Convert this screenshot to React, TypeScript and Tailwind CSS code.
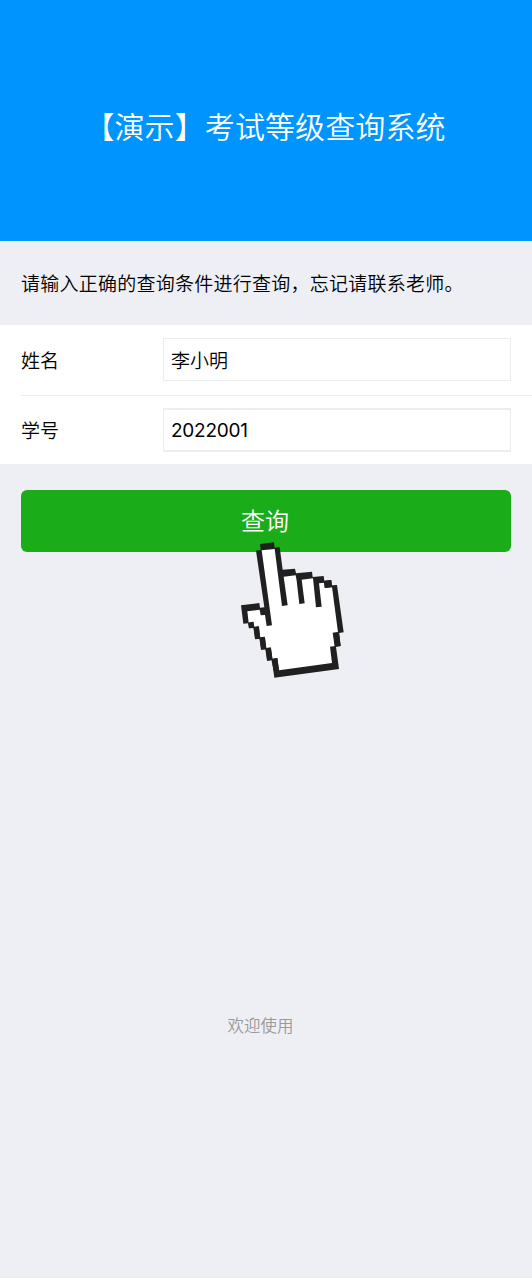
import React, { useState } from 'react';

interface FieldProps {
  label: string;
  value: string;
  onChange: (value: string) => void;
  inputClassName: string;
}

const Field: React.FC<FieldProps> = ({ label, value, onChange, inputClassName }) => (
  <label className="flex items-center pr-[21px]">
    <span className="w-[142px] shrink-0 pt-[5px]">{label}</span>
    <input
      type="text"
      value={value}
      onChange={(e) => onChange(e.target.value)}
      className={`w-full min-w-0 border-[#ebeeee] bg-white px-[7px] outline-none ${inputClassName}`}
    />
  </label>
);

// Pixel-style pointing hand, slightly tilted
const HandPointer: React.FC = () => (
  <svg viewBox="0 0 375 450" className="pointer-events-none absolute left-[230px] top-[535px] h-[150px] w-[125px]">
    <path
      fill="#202020"
      d="M90 27L132 22L134 38L149 36L158 104L195 101L198 115L246 110L248 126L281 123L283 137L303 135L306 151L321 150L341 292L327 294L332 333L318 335L327 402L133 428L126 375L112 377L107 343L94 344L89 311L76 313L71 279L57 280L55 265L40 266L33 211L88 204L90 218L103 217L78 47L92 45Z"
    />
    <path
      fill="#fff"
      d="M95 46L134 42L156 213L173 211L161 125L197 121L200 137L208 207L224 205L215 134L249 130L258 217L275 215L267 145L283 143L285 159L306 156L324 292L310 294L315 333L300 335L306 384L147 406L142 369L127 371L122 337L109 339L104 305L90 307L86 273L73 275L70 260L56 263L52 229L89 224L92 241L105 240L110 273L126 271Z"
    />
    {/* stair corners that keep the outline at full thickness */}
    <path
      fill="#202020"
      d="M54 263L70 260L73 278L57 280ZM70 277L87 275L91 310L75 312ZM88 309L105 307L109 342L93 344ZM106 341L123 338L128 375L111 377ZM124 373L142 369L147 406L131 409ZM281 138L304 135L307 157L284 159ZM308 293L327 291L332 333L314 335Z"
    />
  </svg>
);

const App: React.FC = () => {
  const [name, setName] = useState<string>('李小明');
  const [studentId, setStudentId] = useState<string>('2022001');

  return (
    <div className="relative flex h-[1280px] w-full flex-col border-b-2 border-white bg-[#eeeff5] font-['Inter','Noto_Sans_CJK_SC',sans-serif] text-[19px] font-[350] text-black">
      <header className="flex h-[241px] items-center justify-center bg-[#0094ff] pr-[2px] pt-[14px]">
        <h1 className="whitespace-nowrap text-[30px] font-[350] tracking-[0.1px] text-white">【演示】考试等级查询系统</h1>
      </header>

      <p className="flex h-[84px] items-center whitespace-nowrap pl-[21px] pt-1 tracking-[0.25px]">
        请输入正确的查询条件进行查询，忘记请联系老师。
      </p>

      <form onSubmit={(e) => e.preventDefault()}>
        <div className="h-[139px] bg-white pl-[21px]">
          <div className="border-b border-[#ebeeee] pb-[14px] pt-[13px]">
            <Field label="姓名" value={name} onChange={setName} inputClassName="h-[43px] border pb-px" />
          </div>
          <div className="pt-[12px]">
            <Field
              label="学号"
              value={studentId}
              onChange={setStudentId}
              inputClassName="h-[44px] border border-y-2 font-normal tracking-[-0.25px]"
            />
          </div>
        </div>
        <div className="px-[21px] pt-[26px]">
          <button type="submit" className="h-[62px] w-full rounded-[6px] bg-[#1aad19] pr-[2px] pt-0.5 text-[24px] font-[350] text-white">
            查询
          </button>
        </div>
      </form>

      <footer className="mt-[462px] pr-[11px] text-center text-[16.5px] font-[350] text-[#999]">欢迎使用</footer>

      <HandPointer />
    </div>
  );
};

export default App;
